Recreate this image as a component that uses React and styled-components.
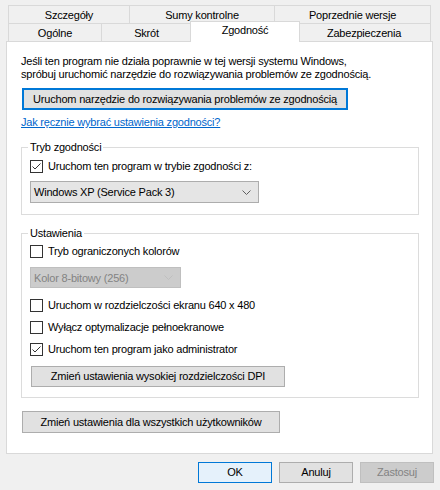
import React from "react";
import styled, { createGlobalStyle } from "styled-components";

const GlobalStyle = createGlobalStyle`
  html, body {
    margin: 0;
    padding: 0;
    width: 440px;
    height: 490px;
    overflow: hidden;
    background: #f0f0f0;
    font-family: "Liberation Sans", Arial, sans-serif;
    font-size: 11px;
    letter-spacing: -0.2px;
    color: #000;
  }
  * { box-sizing: border-box; }
`;

const Dialog = styled.div`
  padding-top: 5px;
`;

const TabRow = styled.div`
  display: flex;
  margin-left: 8px;
  width: 423px;
  height: 18px;
`;

const Tab = styled.div`
  width: ${(p) => p.w}px;
  height: 18px;
  border-top: 1px solid #d9d9d9;
  border-right: 1px solid #d9d9d9;
  border-left: ${(p) => (p.first ? "1px solid #d9d9d9" : "none")};
  background: #f0f0f0;
  text-align: center;
  line-height: 17px;
  padding-top: 1px;
  white-space: nowrap;
`;

const ActiveTab = styled.div`
  position: relative;
  z-index: 1;
  width: ${(p) => p.w + 4}px;
  height: 21px;
  margin: -2px -2px -1px;
  border: 1px solid #d9d9d9;
  border-bottom: none;
  background: #fff;
  text-align: center;
  line-height: 17px;
  white-space: nowrap;
`;

const Panel = styled.div`
  margin-left: 6px;
  width: 427px;
  height: 413px;
  border: 1px solid #d9d9d9;
  background: #fff;
  padding: 13px 13px 0 14px;
`;

const Intro = styled.p`
  margin: 0;
  line-height: 13px;
`;

const Button = styled.button`
  display: block;
  width: ${(p) => p.w}px;
  height: ${(p) => p.h || 21}px;
  margin: ${(p) => p.mt || 0}px 0 0 1px;
  padding: 0;
  font: inherit;
  letter-spacing: inherit;
  white-space: nowrap;
  color: ${(p) => (p.disabled ? "#838383" : "#000")};
  background: ${(p) =>
    p.disabled ? "#cccccc" : p.primary ? "#e5f1fb" : "#e1e1e1"};
  border: ${(p) =>
    p.focused
      ? "2px solid #0078d7"
      : p.primary
      ? "1px solid #0078d7"
      : p.disabled
      ? "1px solid #bfbfbf"
      : "1px solid #adadad"};
  text-align: center;
  line-height: 17px;
`;

const Link = styled.a`
  display: block;
  margin-top: 6px;
  line-height: 13px;
  color: #0066cc;
  text-decoration: underline;
  width: max-content;
`;

const Group = styled.fieldset`
  margin: ${(p) => p.mt}px 0 0;
  padding: 0 8px ${(p) => p.pb}px;
  border: 1px solid #dcdcdc;
  min-width: 0;
`;

const Legend = styled.legend`
  padding: 0 2px;
  margin-left: -2px;
  line-height: 13px;
`;

const CheckRow = styled.div`
  display: flex;
  align-items: center;
  gap: 5px;
  height: 22px;
  margin-top: ${(p) => p.mt || 0}px;
`;

const Box = styled.span`
  width: 13px;
  height: 13px;
  border: 1px solid #333;
  background: #fff;
  display: flex;
  align-items: center;
  justify-content: center;
  flex: none;
`;

const Select = styled.div`
  display: flex;
  align-items: center;
  justify-content: space-between;
  width: ${(p) => p.w}px;
  height: ${(p) => p.h}px;
  margin-top: ${(p) => p.mt}px;
  padding: 0 7px 0 3px;
  background: ${(p) => (p.disabled ? "#cccccc" : "#e5e5e5")};
  border: 1px solid ${(p) => (p.disabled ? "#bfbfbf" : "#adadad")};
  color: ${(p) => (p.disabled ? "#838383" : "#000")};
`;

const Footer = styled.div`
  display: flex;
  justify-content: flex-end;
  gap: 7px;
  margin-top: 8px;
  padding-right: 6px;
`;

const FooterButton = styled(Button)`
  margin: 0;
`;

const Checkbox = ({ checked }) => (
  <Box>
    {checked && (
      <svg width="11" height="11" viewBox="0 0 11 11">
        <polyline
          points="1.5,5.5 4,8 9.5,2.5"
          fill="none"
          stroke="#333"
          strokeWidth="1"
        />
      </svg>
    )}
  </Box>
);

const Chevron = ({ color }) => (
  <svg width="9" height="5" viewBox="0 0 9 5">
    <polyline points="0.5,0.5 4.5,4.5 8.5,0.5" fill="none" stroke={color} strokeWidth="1" />
  </svg>
);

const Check = ({ checked, label, mt }) => (
  <CheckRow mt={mt}>
    <Checkbox checked={checked} />
    <span>{label}</span>
  </CheckRow>
);

export default function App() {
  return (
    <Dialog>
      <GlobalStyle />
      <TabRow>
        <Tab w={122} first>Szczegóły</Tab>
        <Tab w={145}>Sumy kontrolne</Tab>
        <Tab w={156}>Poprzednie wersje</Tab>
      </TabRow>
      <TabRow>
        <Tab w={94} first>Ogólne</Tab>
        <Tab w={90}>Skrót</Tab>
        <ActiveTab w={106}>Zgodność</ActiveTab>
        <Tab w={133}>Zabezpieczenia</Tab>
      </TabRow>
      <Panel>
        <Intro>
          Jeśli ten program nie działa poprawnie w tej wersji systemu Windows,
          <br />
          spróbuj uruchomić narzędzie do rozwiązywania problemów ze zgodnością.
        </Intro>
        <Button w={326} h={22} mt={7} focused>
          Uruchom narzędzie do rozwiązywania problemów ze zgodnością
        </Button>
        <Link href="#">Jak ręcznie wybrać ustawienia zgodności?</Link>

        <Group mt={12} pb={11}>
          <Legend>Tryb zgodności</Legend>
          <Check mt={1} checked label="Uruchom ten program w trybie zgodności z:" />
          <Select w={229} h={22} mt={4}>
            <span>Windows XP (Service Pack 3)</span>
            <Chevron color="#606060" />
          </Select>
        </Group>

        <Group mt={12} pb={10}>
          <Legend>Ustawienia</Legend>
          <Check label="Tryb ograniczonych kolorów" />
          <Select w={151} h={21} mt={5} disabled>
            <span>Kolor 8-bitowy (256)</span>
            <Chevron color="#bfbfbf" />
          </Select>
          <Check mt={6} label="Uruchom w rozdzielczości ekranu 640 x 480" />
          <Check label="Wyłącz optymalizacje pełnoekranowe" />
          <Check checked label="Uruchom ten program jako administrator" />
          <Button w={254} mt={6}>
            Zmień ustawienia wysokiej rozdzielczości DPI
          </Button>
        </Group>

        <Button w={258} h={22} mt={13}>
          Zmień ustawienia dla wszystkich użytkowników
        </Button>
      </Panel>
      <Footer>
        <FooterButton w={74} primary>OK</FooterButton>
        <FooterButton w={74}>Anuluj</FooterButton>
        <FooterButton w={74} disabled>Zastosuj</FooterButton>
      </Footer>
    </Dialog>
  );
}
